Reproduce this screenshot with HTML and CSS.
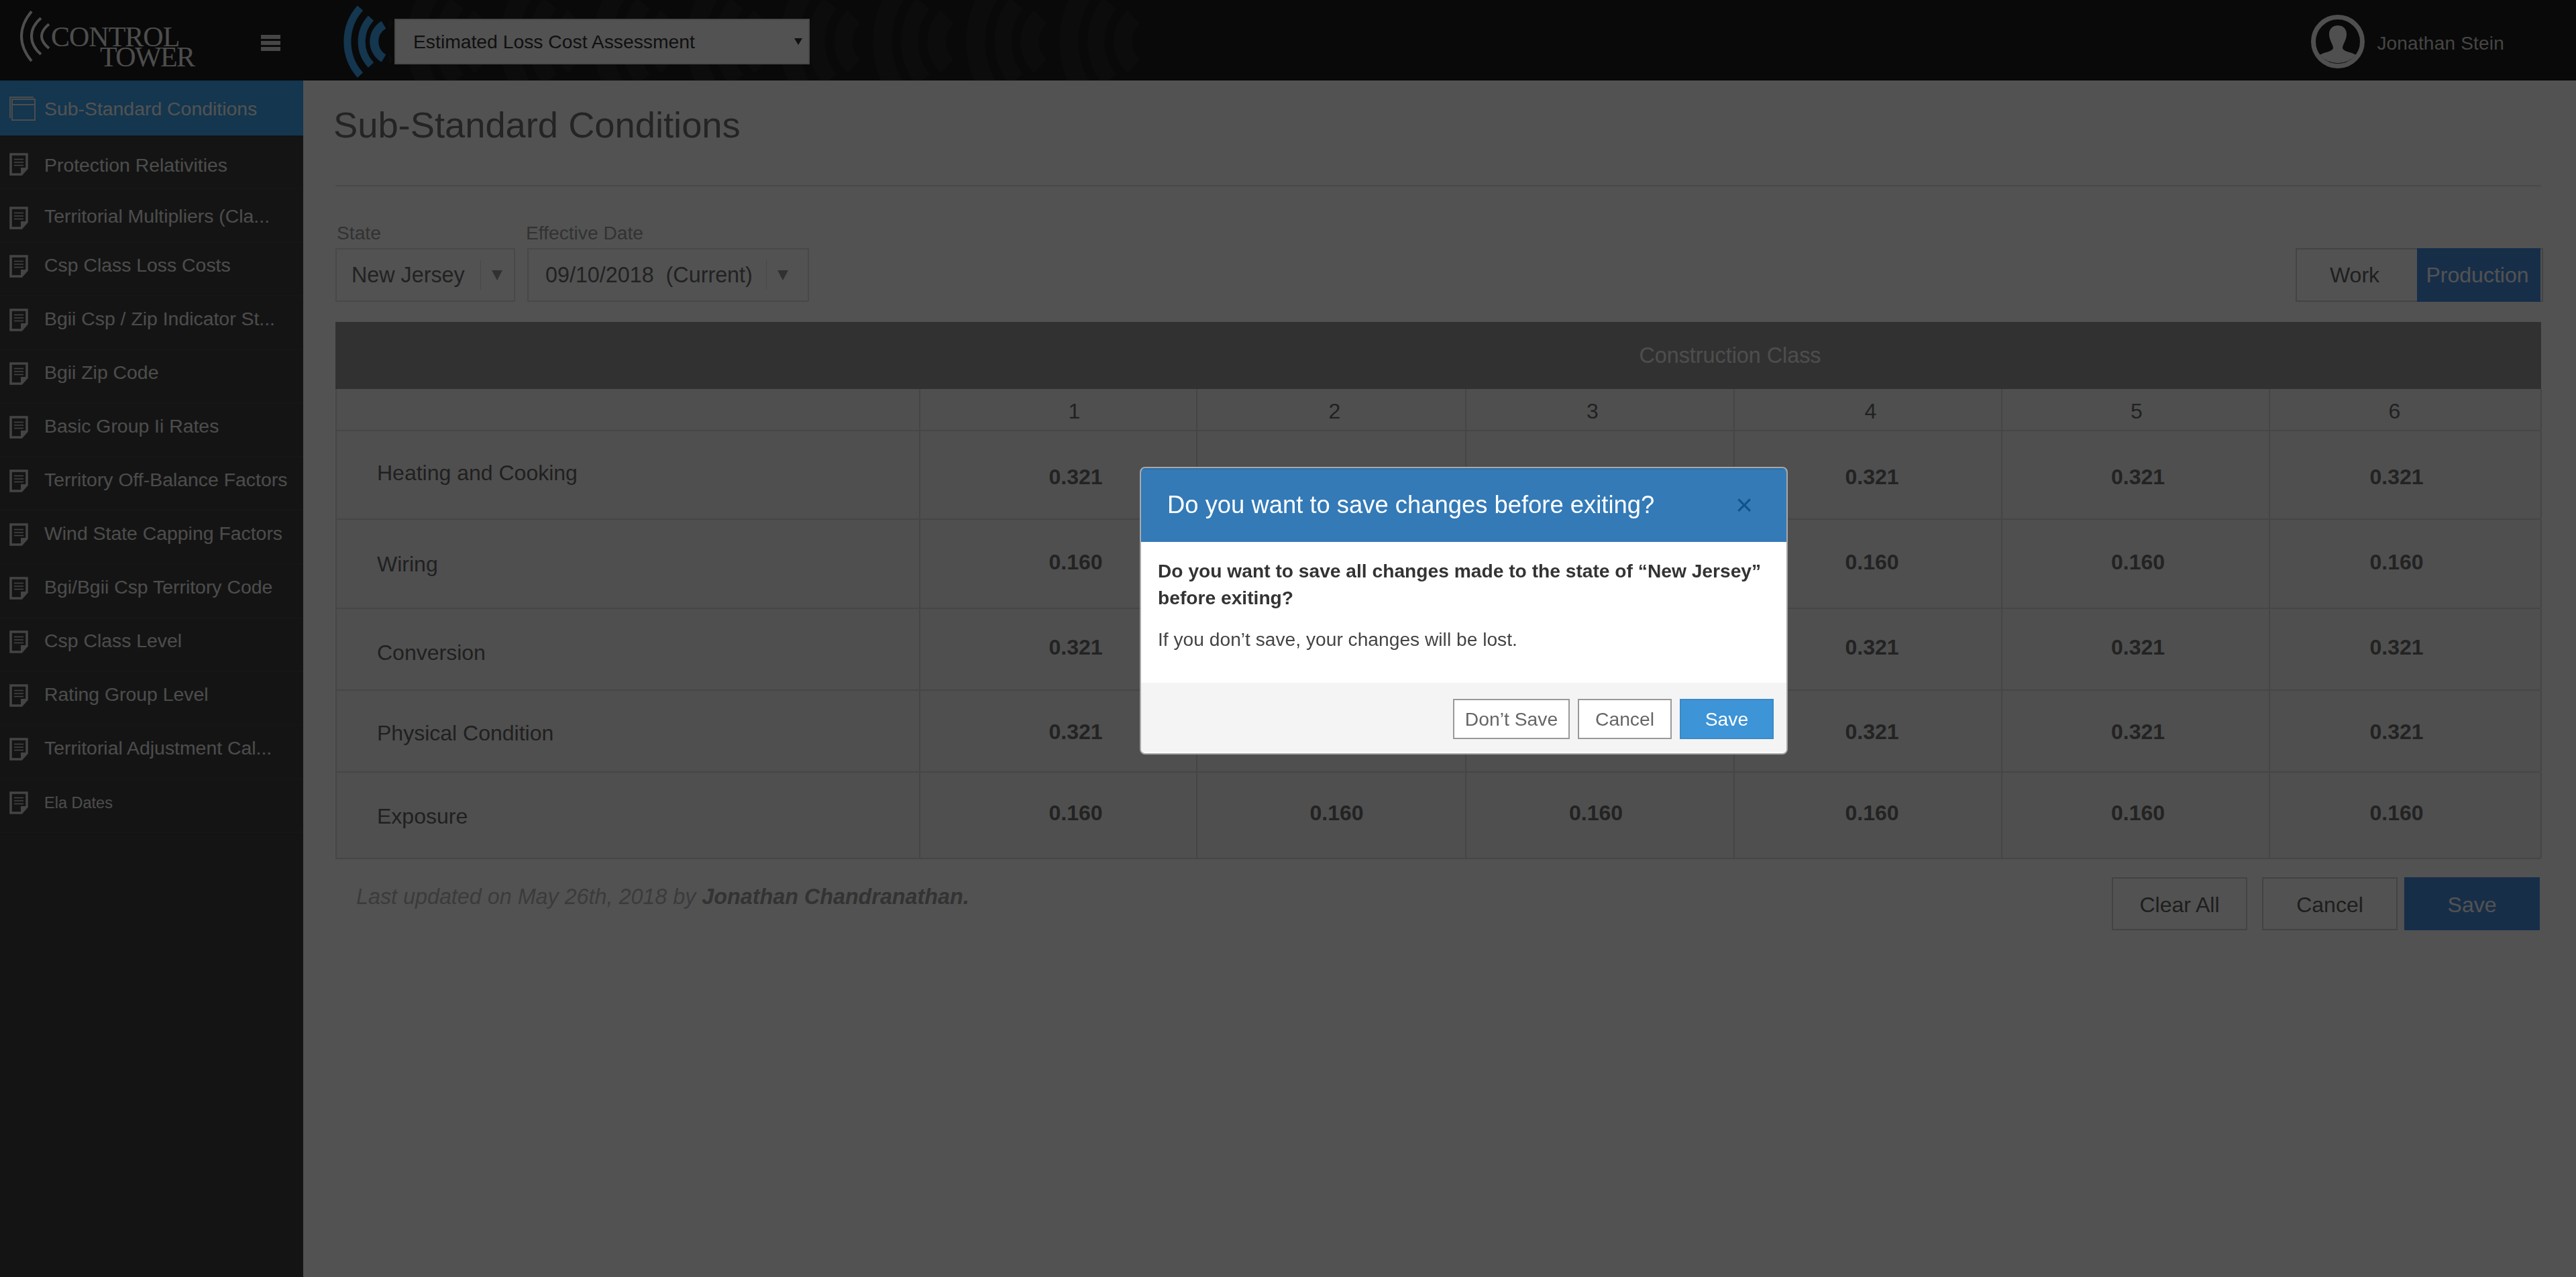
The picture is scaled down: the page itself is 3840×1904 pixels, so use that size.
FILE: index.html
```html
<!DOCTYPE html>
<html lang="en">
<head>
<meta charset="utf-8">
<title>Sub-Standard Conditions</title>
<link rel="stylesheet" href="styles.css">
</head>
<body>
<svg class="defs" width="0" height="0" aria-hidden="true">
  <defs>
    <symbol id="doc" viewBox="0 0 28 34">
      <path class="doc-frame" d="M2 2H26V23L18 32H2Z"/>
      <path class="doc-fold" d="M17 33V22H27Z"/>
      <path class="doc-lines" d="M7 9.5H21M7 14H21M7 18.5H21"/>
    </symbol>
    <pattern id="waves" x="26" y="0" width="139" height="120" patternUnits="userSpaceOnUse">
      <path class="wave wave-a" d="M38 -13A131 131 0 0 0 38 137"/>
      <path class="wave wave-b" d="M75 5.4A90 90 0 0 0 75 118.6"/>
      <path class="wave wave-c" d="M110.9 25.4A50 50 0 0 0 110.9 98.6"/>
    </pattern>
  </defs>
</svg>

<header class="topbar">
  <svg class="topbar-waves" width="1120" height="120" aria-hidden="true"><rect width="1120" height="120" fill="url(#waves)"/></svg>
  <div class="brand">
    <svg class="brand-arcs" width="50" height="80" viewBox="0 0 50 80" aria-hidden="true">
      <path d="M17 3C-3 27 -3 53 17 77"/>
      <path d="M31 13C12.300 29 12.300 51 31 67"/>
      <path d="M43 22C28.300 34 28.300 46 43 58"/>
    </svg>
    <div class="brand-name"><span class="brand-l1">CONTROL</span><span class="brand-l2">TOWER</span></div>
  </div>
  <div class="burger"><i></i><i></i><i></i></div>
  <svg class="app-arcs" width="70" height="120" viewBox="0 0 70 120" aria-hidden="true">
    <path class="a1" d="M25 12A75 75 0 0 0 25 112"/>
    <path class="a2" d="M41 27A51 51 0 0 0 41 97"/>
    <path class="a3" d="M60 37A29 29 0 0 0 60 87"/>
  </svg>
  <div class="app-select">Estimated Loss Cost Assessment<span class="caret caret-sm"></span></div>
  <div class="user">
    <svg class="avatar" width="80" height="80" viewBox="0 0 80 80" aria-hidden="true">
      <circle class="avatar-ring" cx="40" cy="40" r="36.5"/>
      <path class="avatar-body" d="M13 60C20 55 30 56 33 50C33 44 27 38 27 29C27 20 33 16 40 16C47 16 53 20 53 29C53 38 47 44 47 50C50 56 60 55 67 60A36 36 0 0 1 13 60Z"/>
    </svg>
    <span class="user-name">Jonathan Stein</span>
  </div>
</header>

<div class="shell">
  <nav class="sidebar">
    <a class="nav-item nav-active">
      <svg class="nav-icon-win" width="40" height="36" viewBox="0 0 40 36" aria-hidden="true">
        <path d="M1 32V1H36"/><rect x="4" y="4" width="34" height="31"/><path d="M4 12H38"/>
      </svg>
      <span>Sub-Standard Conditions</span>
    </a>
    <a class="nav-item nav-a"><svg class="nav-icon"><use href="#doc"/></svg><span>Protection Relativities</span></a>
    <a class="nav-item nav-b"><svg class="nav-icon"><use href="#doc"/></svg><span>Territorial Multipliers (Cla...</span></a>
    <a class="nav-item nav-c"><svg class="nav-icon"><use href="#doc"/></svg><span>Csp Class Loss Costs</span></a>
    <a class="nav-item"><svg class="nav-icon"><use href="#doc"/></svg><span>Bgii Csp / Zip Indicator St...</span></a>
    <a class="nav-item"><svg class="nav-icon"><use href="#doc"/></svg><span>Bgii Zip Code</span></a>
    <a class="nav-item"><svg class="nav-icon"><use href="#doc"/></svg><span>Basic Group Ii Rates</span></a>
    <a class="nav-item"><svg class="nav-icon"><use href="#doc"/></svg><span>Territory Off-Balance Factors</span></a>
    <a class="nav-item"><svg class="nav-icon"><use href="#doc"/></svg><span>Wind State Capping Factors</span></a>
    <a class="nav-item"><svg class="nav-icon"><use href="#doc"/></svg><span>Bgi/Bgii Csp Territory Code</span></a>
    <a class="nav-item"><svg class="nav-icon"><use href="#doc"/></svg><span>Csp Class Level</span></a>
    <a class="nav-item"><svg class="nav-icon"><use href="#doc"/></svg><span>Rating Group Level</span></a>
    <a class="nav-item"><svg class="nav-icon"><use href="#doc"/></svg><span>Territorial Adjustment Cal...</span></a>
    <a class="nav-item nav-small"><svg class="nav-icon"><use href="#doc"/></svg><span>Ela Dates</span></a>
  </nav>

  <main class="content">
    <h1 class="page-title">Sub-Standard Conditions</h1>
    <hr class="rule">
    <div class="filters">
      <div class="filter filter-state">
        <label class="filter-label">State</label>
        <div class="filter-box"><span class="filter-value">New Jersey</span><span class="filter-div"></span><span class="caret caret-lg"></span></div>
      </div>
      <div class="filter filter-date">
        <label class="filter-label">Effective Date</label>
        <div class="filter-box"><span class="filter-value">09/10/2018&nbsp; (Current)</span><span class="filter-div"></span><span class="caret caret-lg"></span></div>
      </div>
      <div class="toggle">
        <span class="toggle-work">Work</span>
        <span class="toggle-prod">Production</span>
      </div>
    </div>

    <section class="table">
      <div class="t-head">Construction Class</div>
      <div class="t-row t-nums">
        <div class="cell"></div>
        <div class="cell n1">1</div><div class="cell n2">2</div><div class="cell n3">3</div><div class="cell n4">4</div><div class="cell n5">5</div><div class="cell n6">6</div>
      </div>
      <div class="t-row r1">
        <div class="cell lab">Heating and Cooking</div>
        <div class="cell val c1">0.321</div><div class="cell val c2">0.321</div><div class="cell val c3">0.321</div><div class="cell val c4">0.321</div><div class="cell val c5">0.321</div><div class="cell val c6">0.321</div>
      </div>
      <div class="t-row r2">
        <div class="cell lab">Wiring</div>
        <div class="cell val c1">0.160</div><div class="cell val c2">0.160</div><div class="cell val c3">0.160</div><div class="cell val c4">0.160</div><div class="cell val c5">0.160</div><div class="cell val c6">0.160</div>
      </div>
      <div class="t-row r3">
        <div class="cell lab">Conversion</div>
        <div class="cell val c1">0.321</div><div class="cell val c2">0.321</div><div class="cell val c3">0.321</div><div class="cell val c4">0.321</div><div class="cell val c5">0.321</div><div class="cell val c6">0.321</div>
      </div>
      <div class="t-row r4">
        <div class="cell lab">Physical Condition</div>
        <div class="cell val c1">0.321</div><div class="cell val c2">0.321</div><div class="cell val c3">0.321</div><div class="cell val c4">0.321</div><div class="cell val c5">0.321</div><div class="cell val c6">0.321</div>
      </div>
      <div class="t-row r5">
        <div class="cell lab">Exposure</div>
        <div class="cell val c1">0.160</div><div class="cell val c2">0.160</div><div class="cell val c3">0.160</div><div class="cell val c4">0.160</div><div class="cell val c5">0.160</div><div class="cell val c6">0.160</div>
      </div>
    </section>

    <div class="foot">
      <p class="updated">Last updated on May 26th, 2018 by <b>Jonathan Chandranathan.</b></p>
      <div class="foot-actions">
        <button class="btn">Clear All</button>
        <button class="btn btn-cancel">Cancel</button>
        <button class="btn btn-save">Save</button>
      </div>
    </div>
  </main>
</div>

<div class="backdrop"></div>

<div class="modal">
  <div class="modal-head">
    <h2 class="modal-title">Do you want to save changes before exiting?</h2>
    <span class="modal-x">×</span>
  </div>
  <div class="modal-body">
    <p class="modal-strong">Do you want to save all changes made to the state of “New Jersey” before exiting?</p>
    <p class="modal-text">If you don’t save, your changes will be lost.</p>
  </div>
  <div class="modal-foot">
    <button class="mbtn mbtn-dont">Don’t Save</button>
    <button class="mbtn mbtn-cancel">Cancel</button>
    <button class="mbtn mbtn-save">Save</button>
  </div>
</div>
</body>
</html>
```
FILE: styles.css
```css
* { box-sizing: border-box; }
html, body { margin: 0; height: 100%; }
body {
  width: 3840px;
  height: 1904px;
  overflow: hidden;
  background: #fff;
  font-family: "Liberation Sans", Arial, sans-serif;
  display: flex;
  flex-direction: column;
}
.defs { position: absolute; }
.doc-frame { fill: none; stroke: #d2d2d2; stroke-width: 3.5; }
.doc-fold { fill: #d2d2d2; }
.doc-lines { fill: none; stroke: #d2d2d2; stroke-width: 1.6; }
.wave { fill: none; stroke: #262626; }
.wave-a { stroke-width: 28; }
.wave-b { stroke-width: 25; }
.wave-c { stroke-width: 27; }

/* top bar */
.topbar {
  position: relative;
  height: 120px;
  flex: none;
  background: #1c1c1c;
  display: flex;
  align-items: flex-start;
}
.topbar-waves { position: absolute; left: 580px; top: 0; }
.brand { position: relative; width: 389px; height: 120px; flex: none; }
.brand-arcs { position: absolute; left: 30px; top: 14px; overflow: visible; fill: none; stroke: #f2f2f2; stroke-width: 4; }
.brand-name {
  position: absolute; left: 76px; top: 38px;
  font-family: "Liberation Serif", "Times New Roman", serif;
  color: #f0f0f0;
  font-size: 42px;
  line-height: 34px;
  letter-spacing: -1px;
}
.brand-l1, .brand-l2 { display: block; }
.brand-l2 { padding-left: 73px; line-height: 28px; margin-top: -1px; letter-spacing: -1.6px; }
.burger { width: 29px; margin-top: 52px; flex: none; display: flex; flex-direction: column; gap: 3px; }
.burger i { display: block; height: 6px; background: #d8d8d8; }
.app-arcs { position: relative; margin-left: 94px; flex: none; fill: none; stroke: #3fa9f5; }
.a1 { stroke-width: 11; }
.a2 { stroke-width: 11; }
.a3 { stroke-width: 13; }
.app-select {
  position: relative;
  width: 619px;
  height: 68px;
  margin: 28px 0 0 6px;
  padding-left: 26px;
  flex: none;
  background: #fff;
  border: 2px solid #e2e2e2;
  color: #333;
  font-size: 28.3px;
  line-height: 64px;
  display: flex;
}
.caret { display: block; width: 0; height: 0; border-style: solid; border-color: transparent; }
.caret-sm { position: absolute; left: 594px; top: 27px; border-width: 10px 6px 0; border-top-color: #333; }
.caret-lg { border-width: 15px 8px 0; border-top-color: #999; flex: none; }
.user { margin-left: auto; margin-right: 107px; margin-top: 22px; display: flex; align-items: center; gap: 18px; }
.avatar-ring { fill: none; stroke: #f4f4f4; stroke-width: 7; }
.avatar-body { fill: #f4f4f4; }
.user-name { color: #d6d6d6; font-size: 28px; margin-top: 5px; letter-spacing: .2px; }

/* shell */
.shell { flex: 1; display: flex; min-height: 0; }
.sidebar { width: 452px; flex: none; background: #3f3f3f; }
.nav-item {
  display: flex;
  align-items: flex-start;
  height: 80px;
  padding: 18px 0 0 14px;
  border-bottom: 2px solid #464646;
  color: #ececec;
  font-size: 28.4px;
  line-height: 32px;
}
.nav-item span { margin-top: -1px; }
.nav-icon { width: 28px; height: 34px; margin-right: 24px; flex: none; }
.nav-icon-win { margin-right: 12px; flex: none; fill: none; stroke: #efefef; stroke-width: 2; }
.nav-active { height: 82px; padding-top: 24px; background: #3fa9f5; color: #fff; border-bottom: 0; }
.nav-active span { margin-top: 2px; }
.nav-a { padding-top: 26px; }
.nav-a span { margin-top: 2px; }
.nav-b { padding-top: 26px; }
.nav-b span { margin-top: -2px; }
.nav-c span { margin-top: -1px; }
.nav-small { font-size: 23.5px; }
.nav-small span { margin-top: 1px; }

/* content */
.content { flex: 1; min-width: 0; padding: 33px 52px 0 48px; }
.page-title { margin: 0 0 0 -3px; font-size: 54.3px; line-height: 68px; font-weight: 400; color: #707070; }
.rule { margin: 55px 0 0; height: 2px; border: 0; background: #e0e0e0; }
.filters { display: flex; align-items: flex-end; margin-top: 52px; height: 120px; margin-bottom: 30px; }
.filter { display: flex; flex-direction: column; }
.filter-state { width: 268px; }
.filter-date { width: 420px; margin-left: 18px; }
.filter-label { height: 40px; color: #9c9c9c; font-size: 28.2px; line-height: 34px; padding-left: 2px; }
.filter-date .filter-label { margin-left: -4px; }
.filter-box {
  height: 80px;
  border: 2px solid #e0e0e0;
  display: flex;
  align-items: center;
  color: #6a6a6a;
  font-size: 32.3px;
  padding-left: 22px;
}
.filter-date .filter-box { padding-left: 25px; }
.filter-value { white-space: nowrap; margin-top: 1px; }
.filter-div { width: 1px; height: 44px; background: #dcdcdc; margin: 0 16px 0 auto; flex: none; }
.filter-state .filter-div { margin-left: auto; }
.filter-state .caret-lg { margin-right: 17px; }
.filter-date .caret-lg { margin-right: 29px; }
.toggle { margin-left: auto; margin-right: -3px; display: flex; height: 80px; border: 2px solid #d0d0d0; font-size: 32px; line-height: 76px; text-align: center; }
.toggle-work { width: 179px; padding-right: 7px; color: #616161; }
.toggle-prod { width: 184px; margin: -2px 2px -2px 0; padding-right: 4px; line-height: 80px; background: #4a90e2; color: #fff; }

/* table */
.table { width: 3288px; }
.t-head { height: 100px; background: #999; color: #f0f0f0; font-size: 32.3px; line-height: 100px; text-align: center; padding-left: 870px; }
.t-row { display: grid; grid-template-columns: 870px 413px 401px 400px 399px 399px 405px; background: #f6f6f6; border-left: 2px solid #d8d8d8; border-bottom: 2px solid #d8d8d8; }
.cell { border-right: 2px solid #d6d6d6; color: #666; font-size: 32px; display: flex; align-items: center; justify-content: center; }
.t-nums { height: 63px; }
.r1 { height: 132px; }
.r2 { height: 133px; }
.r3, .r4 { height: 122px; }
.r5 { height: 129px; }
.lab { justify-content: flex-start; padding-left: 60px; font-size: 32px; color: #646464; }
.val { font-weight: 700; color: #6c6c6c; }
.n1 { padding-left: 48px; } .n2 { padding-left: 10px; } .n3 { padding-right: 22px; } .n4 { padding-left: 8px; } .n5 { padding-left: 3px; } .n6 { padding-right: 32px; }
.c1 { padding-left: 52px; } .c2 { padding-left: 16px; } .c3 { padding-right: 12px; } .c4 { padding-left: 12px; } .c5 { padding-left: 7px; } .c6 { padding-right: 26px; }
.t-nums .cell { padding-top: 5px; }
.r1 .lab { padding-bottom: 6px; } .r1 .val { padding-top: 7px; }
.r2 .lab { padding-top: 2px; } .r2 .val { padding-bottom: 4px; }
.r3 .lab { padding-top: 10px; } .r3 .val { padding-bottom: 6px; }
.r4 .lab { padding-top: 6px; } .r4 .val { padding-top: 3px; }
.r5 .lab { padding-top: 4px; } .r5 .val { padding-bottom: 6px; }

/* footer */
.foot { display: flex; justify-content: space-between; align-items: flex-start; margin-top: 27px; }
.updated { margin: 9px 0 0 31px; font-size: 32.3px; line-height: 40px; font-style: italic; color: #b8b8b8; }
.updated b { color: #a0a0a0; }
.foot-actions { display: flex; margin-right: 2px; }
.btn { width: 202px; height: 79px; padding: 3px 0 0; border: 2px solid #d0d0d0; background: transparent; color: #5e5e5e; font: 32px "Liberation Sans", Arial, sans-serif; }
.btn-cancel { margin-left: 22px; }
.btn-save { margin-left: 10px; background: #4a90e2; border-color: #4a90e2; color: #fff; }

/* modal */
.backdrop { position: fixed; inset: 0; background: rgba(0, 0, 0, .68); }
.modal {
  position: fixed;
  left: 1699px;
  top: 696px;
  width: 966px;
  height: 429px;
  background: #fff;
  border: 2px solid #a8a8a8;
  border-radius: 8px;
  overflow: hidden;
  display: flex;
  flex-direction: column;
}
.modal-head { height: 110px; flex: none; background: #337ab7; border-top: 2px solid #2e6da4; display: flex; align-items: center; justify-content: space-between; padding: 0 50px 0 39px; }
.modal-title { margin: 0; color: #fff; font-size: 36.4px; font-weight: 400; line-height: 44px; padding-bottom: 2px; }
.modal-x { color: #12518a; font-size: 44px; line-height: 44px; padding-bottom: 2px; }
.modal-body { height: 210px; flex: none; padding: 23px 25px 0; color: #333; font-size: 28.2px; line-height: 40px; }
.modal-strong { margin: 0; font-weight: 700; }
.modal-text { margin: 22px 0 0; color: #444; }
.modal-foot { height: 103px; flex: none; background: #f4f4f4; display: flex; justify-content: flex-end; gap: 12px; padding: 24px 19px 0 0; }
.mbtn { height: 60px; padding: 0; border: 2px solid #999; background: #fff; color: #666; font: 28.3px "Liberation Sans", Arial, sans-serif; }
.mbtn-dont { width: 174px; }
.mbtn-cancel, .mbtn-save { width: 140px; }
.mbtn-save { background: #3d94d6; border-color: #3a8ac8; color: #fff; }
```
